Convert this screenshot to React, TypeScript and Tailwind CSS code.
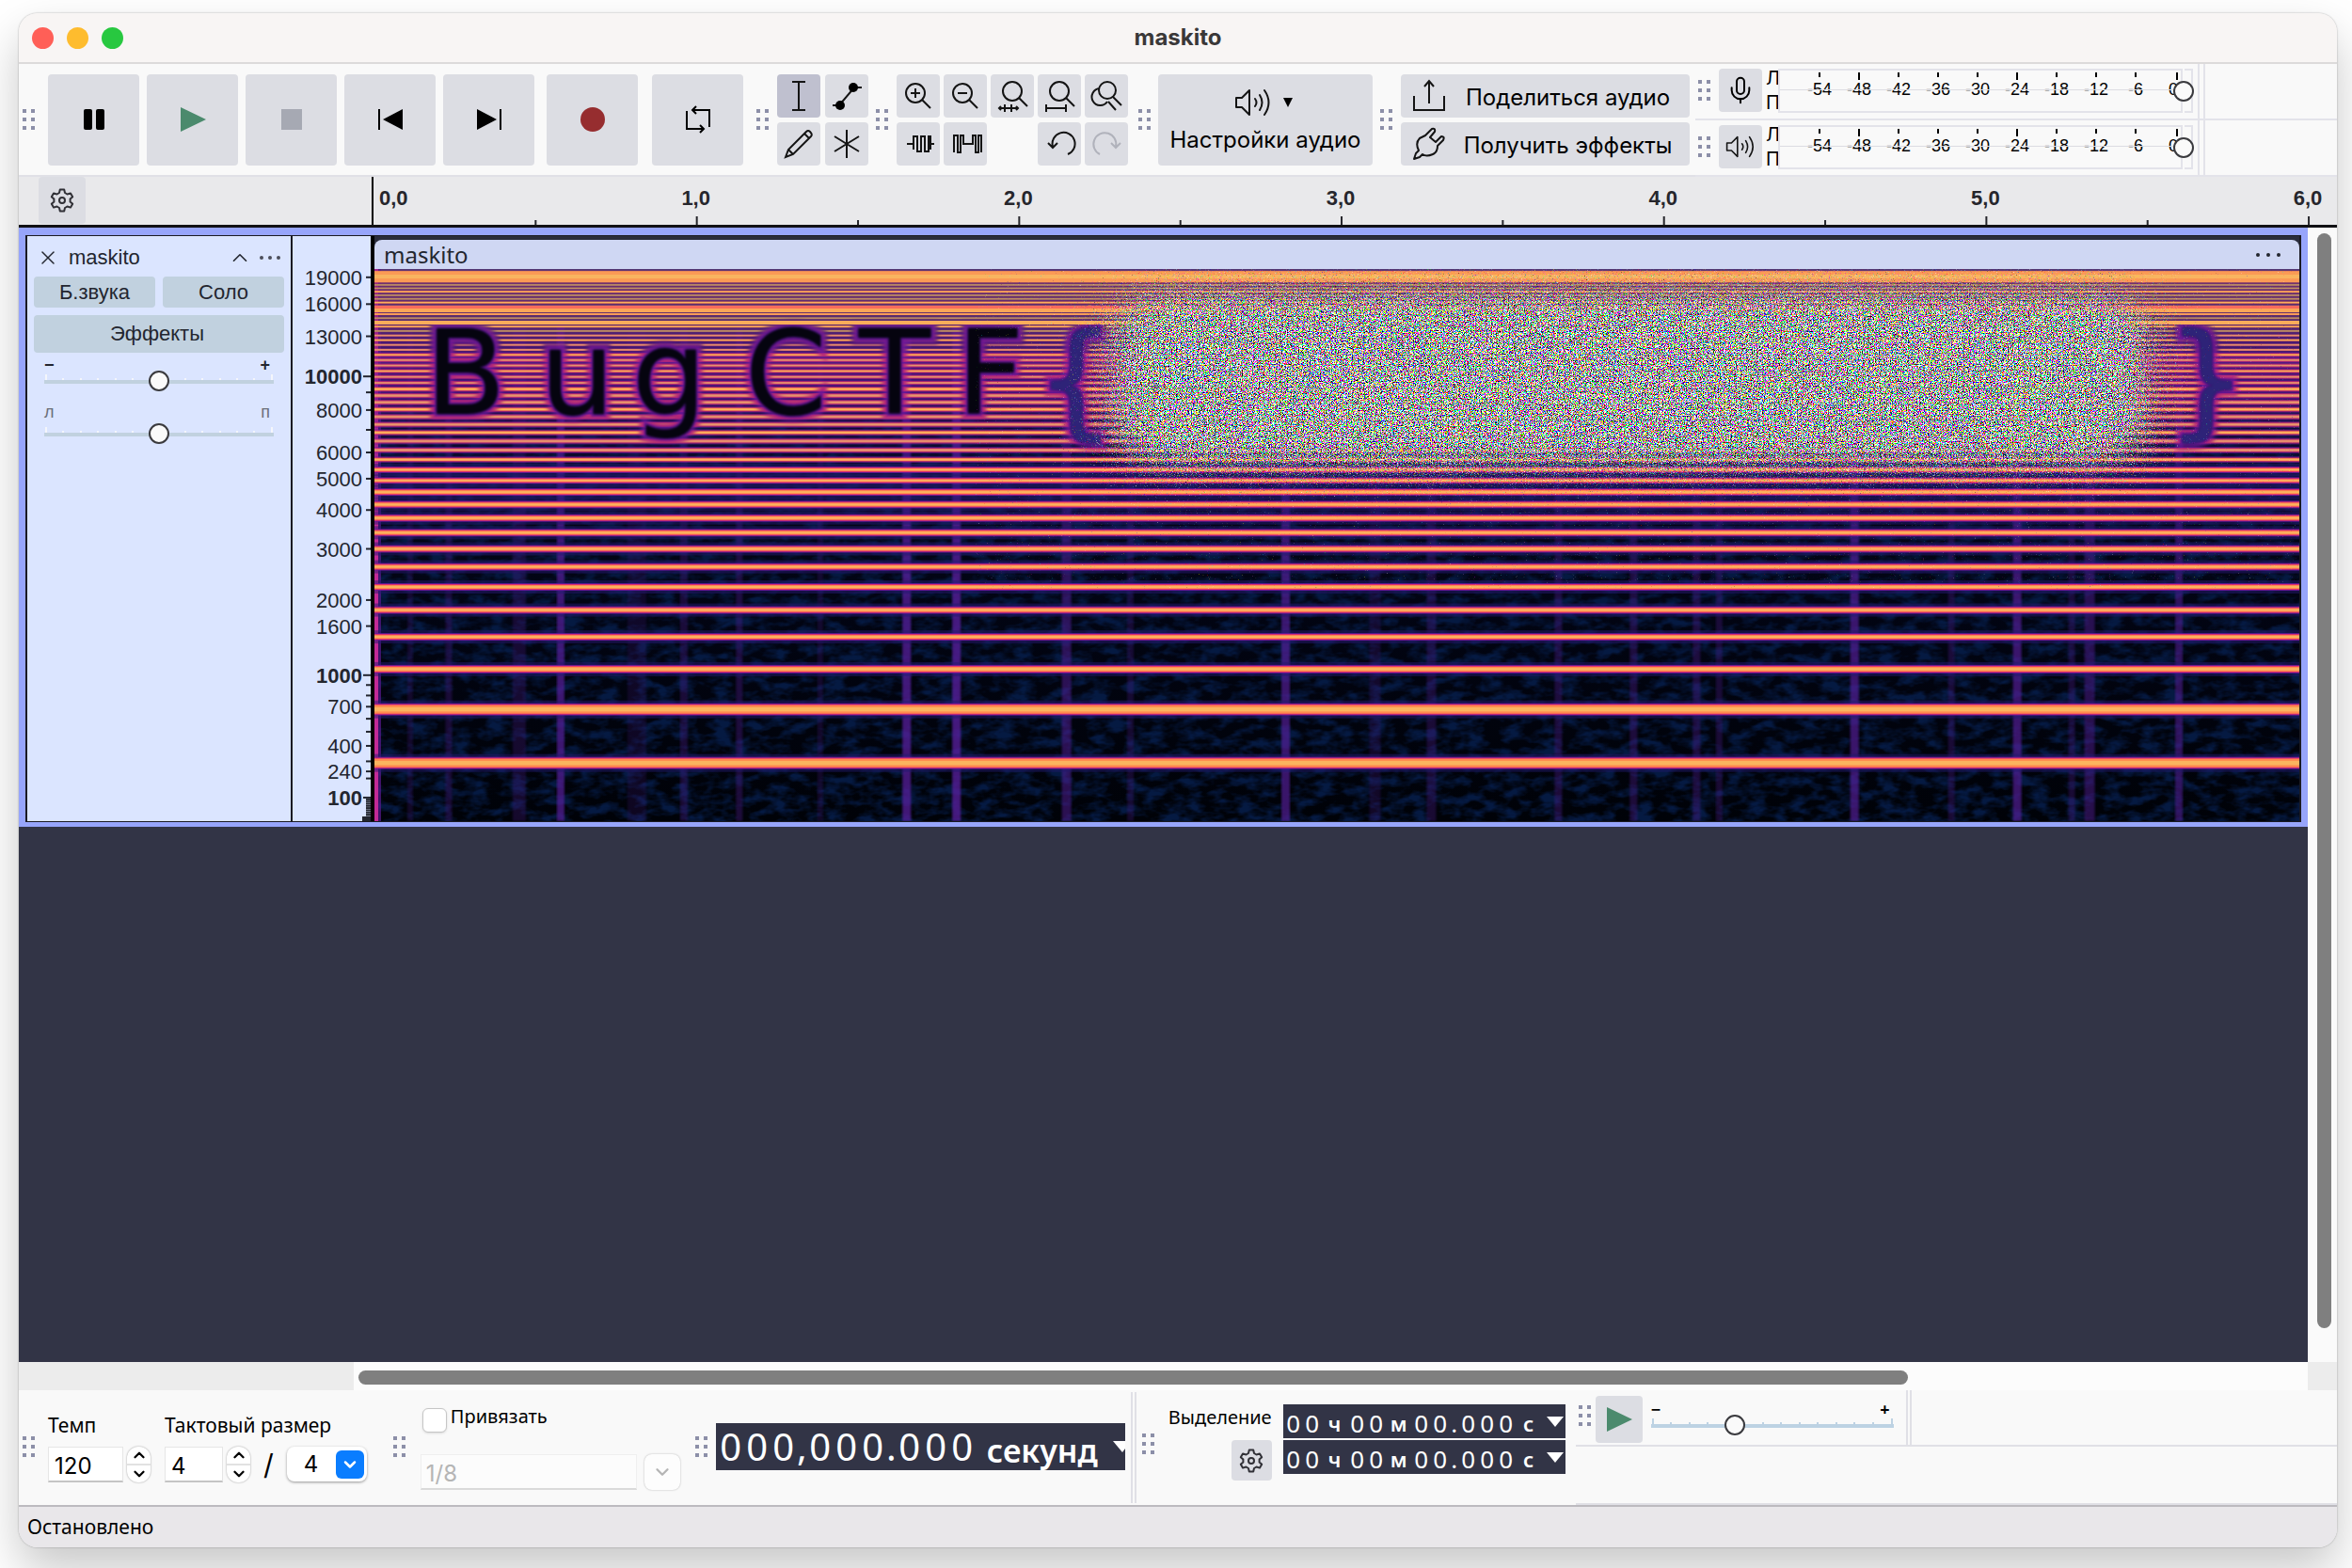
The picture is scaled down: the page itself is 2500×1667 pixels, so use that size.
import { useState } from 'react';
import type { ReactNode } from 'react';
import clsx from 'clsx';
import { ChevronDown, ChevronUp, Mic, X } from 'lucide-react';

// Mel scale used by the spectrogram and its ruler: 0 Hz sits at MEL_BASE px
const MEL_BASE = 585;
const melY = (freq: number) => MEL_BASE - 397.55 * Math.log10(1 + freq / 700);

const harmonics = Array.from({ length: 51 }, (_, n) => ({
  n,
  y: melY(290 + 387.2 * n),
  core: n < 2 ? 9 : n === 2 ? 5 : n < 12 ? 4 : n < 24 ? 3 : 2,
}));

function lineColors(n: number) {
  if (n < 14 || n % 3 === 2) return { edge: '#ff8a4e', center: '#fbb45f' };
  if (n < 34) return { edge: '#e0766c', center: '#e8966c' };
  return { edge: '#a87468', center: '#c49460' };
}

const streaks = [
  { x: 38, w: 6, o: 0.25 },
  { x: 79, w: 7, o: 0.35 },
  { x: 154, w: 14, o: 0.3 },
  { x: 198, w: 8, o: 0.85 },
  { x: 279, w: 20, o: 0.2 },
  { x: 329, w: 8, o: 0.35 },
  { x: 388, w: 7, o: 0.4 },
  { x: 474, w: 6, o: 0.25 },
  { x: 566, w: 9, o: 0.9 },
  { x: 619, w: 9, o: 0.95 },
  { x: 736, w: 10, o: 0.6 },
  { x: 804, w: 7, o: 0.3 },
  { x: 969, w: 9, o: 0.8 },
  { x: 1064, w: 12, o: 0.25 },
  { x: 1124, w: 10, o: 0.35 },
  { x: 1259, w: 8, o: 0.4 },
  { x: 1339, w: 8, o: 0.4 },
  { x: 1406, w: 8, o: 0.4 },
  { x: 1430, w: 7, o: 0.35 },
  { x: 1574, w: 9, o: 0.8 },
  { x: 1677, w: 7, o: 0.35 },
  { x: 1747, w: 9, o: 0.8 },
  { x: 1805, w: 7, o: 0.35 },
  { x: 1824, w: 11, o: 0.55 },
  { x: 1919, w: 8, o: 0.65 },
];

const hiddenText = [
  { char: 'B', x: 54, y: 154, size: 125 },
  { char: 'u', x: 176, y: 154, size: 125 },
  { char: 'g', x: 274, y: 154, size: 125 },
  { char: 'C', x: 394, y: 154, size: 125 },
  { char: 'T', x: 515, y: 154, size: 125 },
  { char: 'F', x: 619, y: 154, size: 125 },
  { char: '{', x: 703, y: 164, size: 134 },
  { char: '}', x: 1906, y: 164, size: 134 },
];

const axisLabels = [19000, 16000, 13000, 10000, 8000, 6000, 5000, 4000, 3000, 2000, 1600, 1000, 700, 400, 240, 100];
const axisTicks = [9000, 7000, 900, 800, 600, 500, 300, 200, 90, 80, 70, 60, 50, 40, 30, 20, 10];
const meterMarks = ['-54', '-48', '-42', '-36', '-30', '-24', '-18', '-12', '-6'];

function Grip({ className }: { className?: string }) {
  return (
    <div className={clsx('grid shrink-0 grid-cols-2 gap-[5px]', className)}>
      {Array.from({ length: 6 }).map((_, i) => (
        <span key={i} className="size-1 bg-[#8c8fa8]" />
      ))}
    </div>
  );
}

function BigButton({ label, className, children }: { label: string; className?: string; children: ReactNode }) {
  return (
    <button aria-label={label} className={clsx('flex size-[97px] shrink-0 items-center justify-center rounded bg-[#dcdde3]', className)}>
      <svg width="32" height="32" viewBox="0 0 32 32" fill="none">
        {children}
      </svg>
    </button>
  );
}

function ToolButton({ label, active, children }: { label: string; active?: boolean; children: ReactNode }) {
  return (
    <button
      aria-label={label}
      className={clsx('flex h-[46px] w-[46px] items-center justify-center rounded', active ? 'bg-[#bfc0cf]' : 'bg-[#dcdde3]')}
    >
      <svg width="36" height="36" viewBox="0 0 36 36" fill="none" stroke="#141414" strokeWidth="2">
        {children}
      </svg>
    </button>
  );
}

function GearIcon() {
  return (
    <svg width="28" height="28" viewBox="0 0 28 28" fill="none" stroke="#303036" strokeWidth="2" strokeLinejoin="round">
      <path d="M11 6 L11.8 2.5 H16.2 L17 6 L19.5 7.5 L23 6.4 L25.2 10.2 L22.6 12.6 V15.4 L25.2 17.8 L23 21.6 L19.5 20.5 L17 22 L16.2 25.5 H11.8 L11 22 L8.5 20.5 L5 21.6 L2.8 17.8 L5.4 15.4 V12.6 L2.8 10.2 L5 6.4 L8.5 7.5 Z" />
      <circle cx="14" cy="14" r="3" />
    </svg>
  );
}

function SpeakerIcon({ className }: { className: string }) {
  return (
    <svg viewBox="0 0 40 32" className={className} fill="none" stroke="#141414" strokeWidth="2" strokeLinecap="round" strokeLinejoin="round">
      <path d="M2 11 H8 L16 3 V29 L8 21 H2 Z" />
      <path d="M22 12 Q25 16 22 20 M27 8 Q32 16 27 24 M32 3 Q41 16 32 29" />
    </svg>
  );
}

const rangeClass =
  'h-6 appearance-none bg-transparent [&::-webkit-slider-runnable-track]:h-1 [&::-webkit-slider-thumb]:-mt-[10px] [&::-webkit-slider-thumb]:size-[22px] [&::-webkit-slider-thumb]:appearance-none [&::-webkit-slider-thumb]:rounded-full [&::-webkit-slider-thumb]:border-2 [&::-webkit-slider-thumb]:border-[#3a3a3e] [&::-webkit-slider-thumb]:bg-[#fafafa]';

type SliderProps = { label: string; min: ReactNode; max: ReactNode; initial: number; ends: string; track: string; tick: string };

function Slider({ label, min, max, initial, ends, track, tick }: SliderProps) {
  const [value, setValue] = useState(initial);
  return (
    <div>
      <div className={clsx('flex items-center justify-between pr-1', ends)}>
        <span>{min}</span>
        <span>{max}</span>
      </div>
      <div className="relative">
        <div className="absolute inset-x-px top-1 flex h-2 items-end justify-between">
          {Array.from({ length: 14 }).map((_, i) => (
            <span key={i} className={clsx('w-[2px]', tick, i === 0 || i === 13 ? 'h-2' : 'h-1')} />
          ))}
        </div>
        <input
          type="range"
          aria-label={label}
          value={value}
          onChange={(e) => setValue(Number(e.target.value))}
          className={clsx('relative block w-full', rangeClass, track)}
        />
      </div>
    </div>
  );
}

function Meter({ kind }: { kind: 'record' | 'playback' }) {
  return (
    <div className="flex h-[60px] border-b-2 border-[#e3e3ea]">
      <div className="flex grow-0 items-start border-r-2 border-[#e3e3ea] pt-[5px] pr-[5px] pl-[3px]">
        <Grip className="mt-3" />
        <button aria-label={kind} className="ml-[9px] flex size-[46px] items-center justify-center rounded bg-[#dcdde3]">
          {kind === 'record' ? <Mic size={32} strokeWidth={1.5} /> : <SpeakerIcon className="h-[26px] w-8" />}
        </button>
        <div className="ml-1 flex h-[46px] w-[13px] flex-col justify-between text-xl leading-5">
          <span>Л</span>
          <span>П</span>
        </div>
        <div className="relative flex h-[47px] w-[430px] shrink-0 border-2 border-[#e3e3ea] pl-[21px] font-['Liberation_Sans',sans-serif] text-lg leading-5">
          <div className="absolute inset-x-0 top-5 h-px bg-[#dcdce2]" />
          {meterMarks.map((mark, i) => (
            <div key={mark} className="flex w-[42px] shrink-0 flex-col items-center">
              <span className={clsx('mt-[2px] w-[2px] bg-black', i === 1 || i === 5 ? 'h-2' : 'mb-[3px] h-[5px]')} />
              <span>{mark}</span>
            </div>
          ))}
          <div className="flex w-6 shrink-0 flex-col items-end">
            <span className="mt-[2px] h-2 w-[2px] bg-black" />
            <span>0</span>
          </div>
          <input
            type="range"
            aria-label={`${kind} level`}
            defaultValue={100}
            className={clsx('absolute top-[11px] left-0 w-[440px] max-w-none', rangeClass)}
          />
        </div>
        <div className="ml-[2px] h-[47px] w-[9px] border-2 border-l-0 border-[#e3e3ea]" />
      </div>
      <div className="ml-1 grow border-l-2 border-[#e3e3ea]" />
    </div>
  );
}

function TopToolbar() {
  return (
    <div className="flex h-[120px] border-b-2 border-[#e0e0e6] bg-[#f9f9f9]">
      <div className="flex items-center pt-[10px] pb-[10px] pl-1">
        <Grip />
        <div className="ml-[14px] flex gap-2">
          <BigButton label="Пауза">
            <rect x="5" y="5" width="9" height="22" rx="2" fill="#000" />
            <rect x="18" y="5" width="9" height="22" rx="2" fill="#000" />
          </BigButton>
          <BigButton label="Воспроизвести">
            <path d="M3 3 L30 16 L3 29 Z" fill="#4b8a6d" />
          </BigButton>
          <BigButton label="Остановить">
            <rect x="5" y="5" width="22" height="22" fill="#a6a9b3" />
          </BigButton>
          <BigButton label="К началу">
            <path d="M4 5 V27" stroke="#000" strokeWidth="2" />
            <path d="M29 5 V27 L8 16 Z" fill="#000" />
          </BigButton>
          <BigButton label="К концу">
            <path d="M28 5 V27" stroke="#000" strokeWidth="2" />
            <path d="M3 5 V27 L24 16 Z" fill="#000" />
          </BigButton>
        </div>
        <BigButton label="Запись" className="ml-[13px]">
          <circle cx="16" cy="16" r="13" fill="#962d2f" />
        </BigButton>
        <BigButton label="Петля" className="ml-[15px]">
          <path d="M10 6 H28 V24 M14 2 L10 6 L14 10 M22 26 H4 V7 M18 22 L22 26 L18 30" stroke="#000" strokeWidth="2" />
        </BigButton>
        <Grip className="ml-[14px]" />
        <div className="ml-[9px] grid grid-cols-2 gap-x-[5px] gap-y-[5px]">
          <ToolButton label="Выделение" active>
            <path d="M11 3 H25 M11 33 H25 M18 3 V33" />
          </ToolButton>
          <ToolButton label="Огибающая">
            <path d="M3 28 H10 L26 9 H34" />
            <circle cx="11" cy="28" r="5" fill="#000" stroke="none" />
            <circle cx="25" cy="9" r="5" fill="#000" stroke="none" />
          </ToolButton>
          <ToolButton label="Карандаш">
            <path d="M4 32 L7 24 L26 5 Q28 3 30 5 Q33 8 31 10 L12 29 Z M7 24 L12 29 M24 7 L29 12" />
          </ToolButton>
          <ToolButton label="Мульти">
            <path d="M18 3 V33 M5 10 L31 26 M31 10 L5 26" />
          </ToolButton>
        </div>
        <Grip className="ml-2" />
        <div className="ml-[9px] grid grid-cols-5 gap-x-1 gap-y-[5px]">
          <ToolButton label="Увеличить">
            <circle cx="15" cy="15" r="10" />
            <path d="M22 22 L31 31 M10 15 H20 M15 10 V20" />
          </ToolButton>
          <ToolButton label="Уменьшить">
            <circle cx="15" cy="15" r="10" />
            <path d="M22 22 L31 31 M10 15 H20" />
          </ToolButton>
          <ToolButton label="По выделению">
            <circle cx="18" cy="13" r="10" />
            <path d="M25 20 L34 29 M4 31 H24 M10 27 V35 M17 27 V35 M6 29 L4 31 L6 33 M22 29 L24 31 L22 33" />
          </ToolButton>
          <ToolButton label="По ширине">
            <circle cx="18" cy="13" r="10" />
            <path d="M25 20 L34 29 M5 31 H25 M4 27 V35 M25 27 V35" />
          </ToolButton>
          <ToolButton label="Переключить масштаб">
            <circle cx="19" cy="12" r="9" />
            <path d="M25 19 L34 28 M11 10 A9 9 0 1 0 19 24 M20 24 L28 33" />
          </ToolButton>
          <ToolButton label="Обрезать">
            <path d="M6 18 H13 M30 18 H35 M13 24 V10 H17 V26 H21 V10 H25 V26 H29 V10 H31 V24" />
          </ToolButton>
          <ToolButton label="Тишина">
            <path d="M6 27 V9 H10 V27 H13 V9 H16 V18 H26 V9 H29 V27 H32 V9 H35 V27" />
          </ToolButton>
          <span />
          <ToolButton label="Отменить">
            <path d="M11 21 A12 12 0 1 1 27 29 M6 17 L11 22 L16 17" />
          </ToolButton>
          <button aria-label="Повторить" disabled className="flex size-[46px] items-center justify-center rounded bg-[#dcdde3]">
            <svg width="36" height="36" viewBox="0 0 36 36" fill="none" stroke="#b0b2bb" strokeWidth="2">
              <path d="M28 21 A12 12 0 1 0 11 29 M33 17 L28 22 L23 17" />
            </svg>
          </button>
        </div>
        <Grip className="ml-[11px]" />
        <button className="ml-2 flex h-[97px] w-[228px] flex-col items-center justify-center gap-2 rounded bg-[#dcdde3] pt-1 text-2xl leading-8">
          <span className="flex items-center gap-3 pr-1">
            <SpeakerIcon className="h-8 w-10" />
            <svg width="10" height="10" viewBox="0 0 10 10">
              <path d="M0 0 H10 L5 10 Z" />
            </svg>
          </span>
          <span className="whitespace-nowrap">Настройки аудио</span>
        </button>
        <Grip className="ml-2" />
        <div className="ml-[9px] flex w-[307px] flex-col gap-[5px] text-2xl">
          <button className="flex h-[46px] items-center rounded bg-[#dcdde3] pl-3">
            <svg width="36" height="36" viewBox="0 0 36 36" fill="none" stroke="#141414" strokeWidth="2">
              <path d="M2 18 V33 H34 V18 M18 26 V2 M13 8 L18 2 L23 8" />
            </svg>
            <span className="grow pt-1 text-center whitespace-nowrap">Поделиться аудио</span>
          </button>
          <button className="flex h-[46px] items-center rounded bg-[#dcdde3] pl-3">
            <svg width="36" height="36" viewBox="0 0 36 36" fill="none" stroke="#141414" strokeWidth="2" strokeLinejoin="round">
              <path d="M2 34 L4 28 L7 25 Q3 17 8 12 L14 9 L21 2 Q25 1 24 5 L19 11 L25 16 L31 10 Q35 10 33 14 L27 20 Q27 27 22 29 Q15 32 11 29 L8 32 Z" />
            </svg>
            <span className="grow pt-1 text-center whitespace-nowrap">Получить эффекты</span>
          </button>
        </div>
      </div>
      <div className="ml-[6px] grow">
        <Meter kind="record" />
        <Meter kind="playback" />
      </div>
    </div>
  );
}

function TimeRuler() {
  return (
    <div className="flex h-[54px] border-b-[3px] border-[#111114] bg-[#e9e9eb]">
      <div className="w-[375px] shrink-0 pl-[21px]">
        <button aria-label="Параметры шкалы" className="flex h-[50px] w-[50px] items-center justify-center rounded bg-[#dcdde3]">
          <GearIcon />
        </button>
      </div>
      <div className="w-[2px] shrink-0 bg-black" />
      <svg className="h-[51px] grow overflow-visible font-['Liberation_Sans',sans-serif] text-[22px] font-bold" fill="#26262c">
        <text x="6" y="30">0,0</text>
        {[1, 2, 3, 4, 5, 6].map((sec) => (
          <g key={sec}>
            <text x={`${sec * 16.667}%`} y="30" textAnchor="middle">{`${sec},0`}</text>
            <rect x={`${sec * 16.667}%`} y="42" width="2" height="9" />
            <rect x={`${sec * 16.667 - 8.333}%`} y="46" width="2" height="5" />
          </g>
        ))}
      </svg>
      <div className="w-[31px] shrink-0" />
    </div>
  );
}

function TrackPanel() {
  return (
    <div className="w-[282px] shrink-0 border-r-2 border-[#1a1a22] px-[7px] pt-[9px] font-['Liberation_Sans',sans-serif] text-[22px] leading-7 text-[#23262f]">
      <div className="flex items-center gap-2">
        <button aria-label="Закрыть" className="ml-[3px]">
          <X size={24} strokeWidth={1.5} />
        </button>
        <span className="grow pl-[2px]">maskito</span>
        <button aria-label="Свернуть">
          <ChevronUp size={26} strokeWidth={1.5} />
        </button>
        <button aria-label="Меню" className="mr-1 flex gap-[5px]">
          <span className="size-1 rounded-full bg-[#4a4d5a]" />
          <span className="size-1 rounded-full bg-[#4a4d5a]" />
          <span className="size-1 rounded-full bg-[#4a4d5a]" />
        </button>
      </div>
      <div className="mt-[6px] grid grid-cols-2 gap-2">
        <button className="h-[33px] rounded bg-[#c1d1df]">Б.звука</button>
        <button className="h-[33px] rounded bg-[#c1d1df]">Соло</button>
        <button className="col-span-2 h-10 rounded bg-[#c1d1df] pr-1">Эффекты</button>
      </div>
      <div className="mt-[7px] flex flex-col gap-2 px-[11px]">
        <Slider label="Усиление" min={<b>−</b>} max={<b>+</b>} initial={50} ends="h-3 text-lg" track="[&::-webkit-slider-runnable-track]:bg-[#c1d1df]" tick="bg-[#f4f6fb]" />
        <Slider label="Панорама" min="л" max="п" initial={50} ends="h-6 text-lg text-[#6b6f7a]" track="[&::-webkit-slider-runnable-track]:bg-[#c1d1df]" tick="bg-[#f4f6fb]" />
      </div>
    </div>
  );
}

function FrequencyAxis() {
  return (
    <svg width="83" height="622" className="shrink-0 font-['Liberation_Sans',sans-serif] text-[22px]" fill="#23262f">
      {axisLabels.map((freq) => {
        const y = melY(freq) + 35;
        const major = [100, 1000, 10000].includes(freq);
        return (
          <g key={freq}>
            <text x="74" y={y + 8} textAnchor="end" fontWeight={major ? 700 : 400}>
              {freq}
            </text>
            <rect x={major ? 75 : 78} y={y - 1} width="8" height="2" />
          </g>
        );
      })}
      {axisTicks.map((freq) => (
        <rect key={freq} x="78" y={melY(freq) + 34} width="5" height="2" />
      ))}
      <rect x="74" y="617" width="9" height="5" />
    </svg>
  );
}

function Glyphs({ count = 8 }: { count?: number }) {
  return (
    <>
      {hiddenText.slice(0, count).map(({ char, x, y, size }) => (
        <text key={char} x={x} y={y} fontSize={size} fontFamily="DejaVu Sans, sans-serif">
          {char}
        </text>
      ))}
    </>
  );
}

function Spectrogram() {
  return (
    <svg viewBox="0 0 2047 587" preserveAspectRatio="none" className="block h-[587px] w-full bg-black" colorInterpolationFilters="sRGB">
      <defs>
        <linearGradient id="wash" x1="0" y1="0" x2="0" y2="1">
          <stop offset="0" stopColor="#5a4470" />
          <stop offset="0.09" stopColor="#453c60" />
          <stop offset="0.13" stopColor="#3a1a70" />
          <stop offset="0.2" stopColor="#240a48" />
          <stop offset="0.28" stopColor="#0c0624" />
          <stop offset="0.36" stopColor="#03061a" />
          <stop offset="1" stopColor="#000208" />
        </linearGradient>
        <filter id="mottle" x="0" y="0" width="1" height="1">
          <feTurbulence type="fractalNoise" baseFrequency="0.05 0.1" numOctaves="3" seed="4" />
          <feColorMatrix values="0 0 0 0 0.02  0 0 0 0 0.1  0 0 0 0 0.26  3 0 0 0 -1.2" />
        </filter>
        <filter id="grain" filterUnits="userSpaceOnUse" x="640" y="0" width="1407" height="340">
          <feTurbulence type="fractalNoise" baseFrequency="0.83" numOctaves="2" seed="11" result="rgb" />
          <feComponentTransfer in="rgb" result="color">
            <feFuncR type="linear" slope="14" intercept="-6" />
            <feFuncG type="linear" slope="14" intercept="-6" />
            <feFuncB type="linear" slope="14" intercept="-6" />
            <feFuncA type="linear" slope="0" intercept="1" />
          </feComponentTransfer>
          <feTurbulence type="fractalNoise" baseFrequency="0.91" numOctaves="2" seed="37" />
          <feColorMatrix values="0 0 0 0 0  0 0 0 0 0  0 0 0 0 0  1 0 0 0 0" result="dots" />
          <feGaussianBlur in="SourceGraphic" stdDeviation="34 28" result="soft" />
          <feComposite in="soft" in2="dots" operator="arithmetic" k2="2" k3="2" k4="-1.4" result="cover" />
          <feComposite in="color" in2="cover" operator="in" />
        </filter>
        <filter id="soft3">
          <feGaussianBlur stdDeviation="2" />
        </filter>
        <filter id="soft2">
          <feGaussianBlur stdDeviation="1" />
        </filter>
        <mask id="cutWide" maskUnits="userSpaceOnUse" x="0" y="0" width="2047" height="587">
          <rect width="2047" height="587" fill="#fff" />
          <g fill="#000" stroke="#000" strokeWidth="14" filter="url(#soft3)">
            <Glyphs />
          </g>
        </mask>
        <mask id="cutNarrow" maskUnits="userSpaceOnUse" x="0" y="0" width="2047" height="587">
          <rect width="2047" height="587" fill="#fff" />
          <g fill="#000" stroke="#000" strokeWidth="5" filter="url(#soft2)">
            <Glyphs />
          </g>
        </mask>
      </defs>
      <rect width="2047" height="587" fill="url(#wash)" />
      <rect y="150" width="2047" height="437" filter="url(#mottle)" />
      <g fill="#5a20a0">
        {streaks.map(({ x, w, o }) => (
          <rect key={x} x={x - w / 2} y="60" width={w} height="527" opacity={o * 0.8} filter="url(#soft2)" />
        ))}
      </g>
      <rect width="4" height="587" fill="#c22a96" />
      <rect x="4" width="3" height="587" fill="#5a1a90" opacity="0.7" />
      {harmonics.map(({ n, y, core }) => (
        <g key={n}>
          <rect y={y - core / 2 - 5} width="2047" height={core + 10} fill="#241a70" opacity={n < 14 ? 0.5 : 0.1} />
          <rect y={y - core / 2 - 2} width="2047" height={core + 4} fill="#6c1a9c" opacity={n < 14 ? 0.9 : n < 30 ? 0.6 : 0.15} />
        </g>
      ))}
      <g filter="url(#soft3)" fill="#2b0f60" stroke="#7a18a0" strokeWidth="10" paintOrder="stroke" opacity="0.8">
        <Glyphs />
      </g>
      <g fill="#e8306c" mask="url(#cutNarrow)">
        {harmonics.map(({ n, y, core }) => (
          <rect key={n} y={y - core / 2 - 1} width="2047" height={core + 2} opacity={n < 14 ? 1 : n < 30 ? 0.6 : 0.15} />
        ))}
      </g>
      <g mask="url(#cutWide)">
        {harmonics.map(({ n, y, core }) => (
          <g key={n}>
            <rect y={y - core / 2} width="2047" height={core} fill={lineColors(n).edge} />
            <rect y={y - core / 4} width="2047" height={core / 2} fill={lineColors(n).center} />
          </g>
        ))}
      </g>
      <rect y="3" width="2047" height="11" fill="#fb9a55" />
      <rect y="6" width="2047" height="4" fill="#f9b45f" />
      <rect y="39" width="2047" height="3" fill="#f86a5c" />
      <rect y="42" width="2047" height="4" fill="#fba658" />
      <rect y="55" width="2047" height="4" fill="#fbac5a" />
      <g filter="url(#soft2)" fill="#05040f">
        <Glyphs count={6} />
      </g>
      <g filter="url(#soft2)" fill="#2e2378">
        {hiddenText.slice(6).map(({ char, x, y, size }) => (
          <text key={char} x={x} y={y} fontSize={size} fontFamily="DejaVu Sans, sans-serif">
            {char}
          </text>
        ))}
      </g>
      <rect x="790" y="32" width="1090" height="172" filter="url(#grain)" />
    </svg>
  );
}

function Track() {
  return (
    <div className="border-[7px] border-t-8 border-b-[5px] border-[#97a5fb] bg-[#dbe5ff]">
      <div className="flex border-2 border-y border-[#1a1a22]">
        <TrackPanel />
        <FrequencyAxis />
        <div className="grow border-l-4 border-black bg-[#2a2c3c] pt-1">
          <div className="flex h-[31px] items-center justify-between rounded-t-lg bg-[#cfd7f3] pr-5 pl-[10px] font-['Noto_Sans',sans-serif] text-2xl text-[#23262f]">
            <span>maskito</span>
            <button aria-label="Меню клипа" className="flex gap-[7px]">
              <span className="size-1 rounded-full bg-[#23262f]" />
              <span className="size-1 rounded-full bg-[#23262f]" />
              <span className="size-1 rounded-full bg-[#23262f]" />
            </button>
          </div>
          <Spectrogram />
        </div>
      </div>
    </div>
  );
}

function Stepper({ label, value, width }: { label: string; value: string; width: string }) {
  return (
    <div className="flex items-center gap-1">
      <input
        aria-label={label}
        defaultValue={value}
        className={clsx('h-[38px] border border-b-2 border-[#e6e6e6] border-b-[#c4c4c4] bg-white pl-[6px] pt-1 text-2xl', width)}
      />
      <div className="flex h-[38px] w-[25px] flex-col divide-y-2 divide-[#e2e2e2] rounded-xl bg-white shadow-[0_0_2px_rgba(0,0,0,0.4)]">
        <button aria-label="Больше" className="flex flex-1 items-center justify-center">
          <ChevronUp size={18} strokeWidth={3} />
        </button>
        <button aria-label="Меньше" className="flex flex-1 items-center justify-center">
          <ChevronDown size={18} strokeWidth={3} />
        </button>
      </div>
    </div>
  );
}

function SelectionTime() {
  return (
    <div className="flex h-9 w-[300px] items-end bg-[#323446] pl-[1px] font-['Noto_Sans',sans-serif] text-[26px] leading-8 text-white">
      {'00ч00м00.000с'.split('').map((char, i) => (
        <span
          key={i}
          className={clsx(
            'text-center',
            char === '.' ? 'w-[10px]' : /\d/.test(char) ? 'w-5' : 'w-7 text-[22px] font-semibold',
          )}
        >
          {char}
        </span>
      ))}
      <button aria-label="Формат" className="mb-3 ml-auto pr-[2px]">
        <svg width="18" height="11" viewBox="0 0 18 11" fill="#fff">
          <path d="M0 0 H18 L9 11 Z" />
        </svg>
      </button>
    </div>
  );
}

function BottomToolbar() {
  return (
    <div className="flex h-[122px] bg-[#f9f9f9] font-['Noto_Sans',sans-serif] text-[21px] leading-7">
      <div className="flex items-center pb-[2px] pl-1">
        <Grip />
        <div className="ml-[14px]">
          <div className="mb-[9px]">Темп</div>
          <div className="font-['Inter',sans-serif]">
            <Stepper label="Темп" value="120" width="w-[80px]" />
          </div>
        </div>
        <div className="ml-[15px]">
          <div className="mb-[9px]">Тактовый размер</div>
          <div className="flex items-center font-['Inter',sans-serif]">
            <Stepper label="Доли" value="4" width="w-[62px]" />
            <span className="mx-[14px] text-3xl leading-8">/</span>
            <div className="relative flex">
              <select aria-label="Длительность" className="h-[37px] w-[85px] appearance-none rounded-lg bg-white pl-[18px] text-2xl shadow-[0_1px_3px_rgba(0,0,0,0.4)]">
                <option>4</option>
                <option>8</option>
                <option>16</option>
              </select>
              <span className="pointer-events-none absolute top-1 right-[3px] flex size-[30px] items-center justify-center rounded-md bg-[#0a7dff] text-white">
                <ChevronDown size={20} strokeWidth={3} />
              </span>
            </div>
          </div>
        </div>
        <Grip className="ml-7" />
        <div className="ml-4">
          <label className="flex items-center gap-1 pl-[2px] text-xl leading-7">
            <input type="checkbox" className="size-[26px] appearance-none rounded-md border border-[#c6c6c6] bg-white shadow-sm" />
            <span className="pb-2">Привязать</span>
          </label>
          <div className="mt-[18px] flex gap-2 font-['Inter',sans-serif]">
            <input
              aria-label="Шаг привязки"
              defaultValue="1/8"
              disabled
              className="h-[38px] w-[230px] border border-b-2 border-[#efefef] border-b-[#dadada] bg-[#fcfcfc] pt-1 pl-[5px] text-2xl text-[#b5b5b5]"
            />
            <button aria-label="Открыть список" disabled className="flex size-[38px] items-center justify-center rounded-lg bg-[#fdfdfd] text-[#b5b5b5] shadow-[0_0_2px_rgba(0,0,0,0.3)]">
              <ChevronDown size={22} strokeWidth={2.5} />
            </button>
          </div>
        </div>
        <Grip className="ml-4" />
        <div className="ml-[9px] flex h-[50px] w-[435px] items-center bg-[#323446] pl-[2px] font-['Noto_Sans',sans-serif] text-[40px] leading-[50px] text-white">
          {'000,000.000'.split('').map((char, i) => (
            <span key={i} className={clsx('shrink-0 text-center', /\d/.test(char) ? 'w-7' : 'w-[11px]')}>
              {char}
            </span>
          ))}
          <span className="ml-3 pt-2 text-[34px] font-semibold">секунд</span>
          <button aria-label="Формат времени" className="ml-auto shrink-0">
            <svg width="13" height="12" viewBox="0 0 13 12" fill="#fff">
              <path d="M0 0 H13 V8 L10 12 Z" />
            </svg>
          </button>
        </div>
      </div>
      <div className="mt-[2px] ml-[6px] h-[118px] w-[6px] border-x-2 border-[#e0e0e6]" />
      <div className="flex items-start pl-[6px]">
        <Grip className="mt-[46px]" />
        <div className="mt-[15px] ml-[15px] flex flex-col items-end gap-[10px]">
          <span className="text-xl leading-7">Выделение</span>
          <button aria-label="Параметры выделения" className="flex size-[43px] items-center justify-center rounded-sm bg-[#dcdde3]">
            <GearIcon />
          </button>
        </div>
        <div className="mt-[15px] ml-3 flex flex-col gap-[2px]">
          <SelectionTime />
          <SelectionTime />
        </div>
      </div>
      <div className="ml-[11px] flex grow flex-col border-b-2 border-[#e0e0e6]">
        <div className="flex h-[60px] border-b-2 border-[#e0e0e6]">
          <div className="flex items-start pt-[6px] pl-[3px]">
            <Grip className="mt-[10px]" />
            <button aria-label="Воспроизвести на скорости" className="ml-[5px] flex size-[50px] items-center justify-center rounded bg-[#dcdde3]">
              <svg width="28" height="28" viewBox="0 0 28 28">
                <path d="M1 1 L28 14 L1 27 Z" fill="#4b8a6d" />
              </svg>
            </button>
            <div className="mt-[8px] ml-[9px] w-[258px]">
              <Slider label="Скорость" min={<b>−</b>} max={<b>+</b>} initial={33} ends="h-3 text-lg" track="[&::-webkit-slider-runnable-track]:bg-[#bdd2e3]" tick="bg-[#bdd2e3]" />
            </div>
          </div>
          <div className="ml-[13px] w-[6px] border-x-2 border-[#e0e0e6]" />
        </div>
      </div>
    </div>
  );
}

export default function App() {
  return (
    <div className="flex min-h-screen flex-col bg-white pt-[14px] pr-4 pb-[22px] pl-5 font-['Inter',sans-serif] text-black">
      <div className="flex grow flex-col overflow-hidden rounded-[20px] bg-[#f9f9f9] shadow-[0_0_2px_rgba(0,0,0,0.35),0_24px_50px_rgba(0,0,0,0.22)]">
        <header className="relative flex h-[54px] items-center justify-center border-b-2 border-[#dcdada] bg-[#f8f5f4]">
          <div className="absolute left-[14px] flex gap-[14px]">
            <button aria-label="Закрыть окно" className="size-[23px] rounded-full bg-[#ff5f57]" />
            <button aria-label="Свернуть окно" className="size-[23px] rounded-full bg-[#febc2e]" />
            <button aria-label="Развернуть окно" className="size-[23px] rounded-full bg-[#28c840]" />
          </div>
          <h1 className="text-2xl font-bold text-[#3a3838]">maskito</h1>
        </header>
        <TopToolbar />
        <TimeRuler />
        <main className="flex grow">
          <div className="grow bg-[#323446]">
            <Track />
          </div>
          <div className="w-[31px] shrink-0 bg-[#fafafa] pt-[6px] pl-[10px]">
            <div className="h-[97%] w-[15px] rounded-full bg-[#7f7f7f]" />
          </div>
        </main>
        <div className="flex h-[30px] bg-[#ececec]">
          <div className="ml-[356px] grow bg-[#fcfcfc] pt-[9px] pl-[5px]">
            <div className="h-[15px] w-[79.5%] rounded-full bg-[#7f7f7f]" />
          </div>
          <div className="w-[31px]" />
        </div>
        <BottomToolbar />
        <footer className="h-[45px] border-t-2 border-[#bcbabf] bg-[#e9e7ea] px-[9px] font-['Noto_Sans',sans-serif] text-[21px] leading-[42px]">
          Остановлено
        </footer>
      </div>
    </div>
  );
}
